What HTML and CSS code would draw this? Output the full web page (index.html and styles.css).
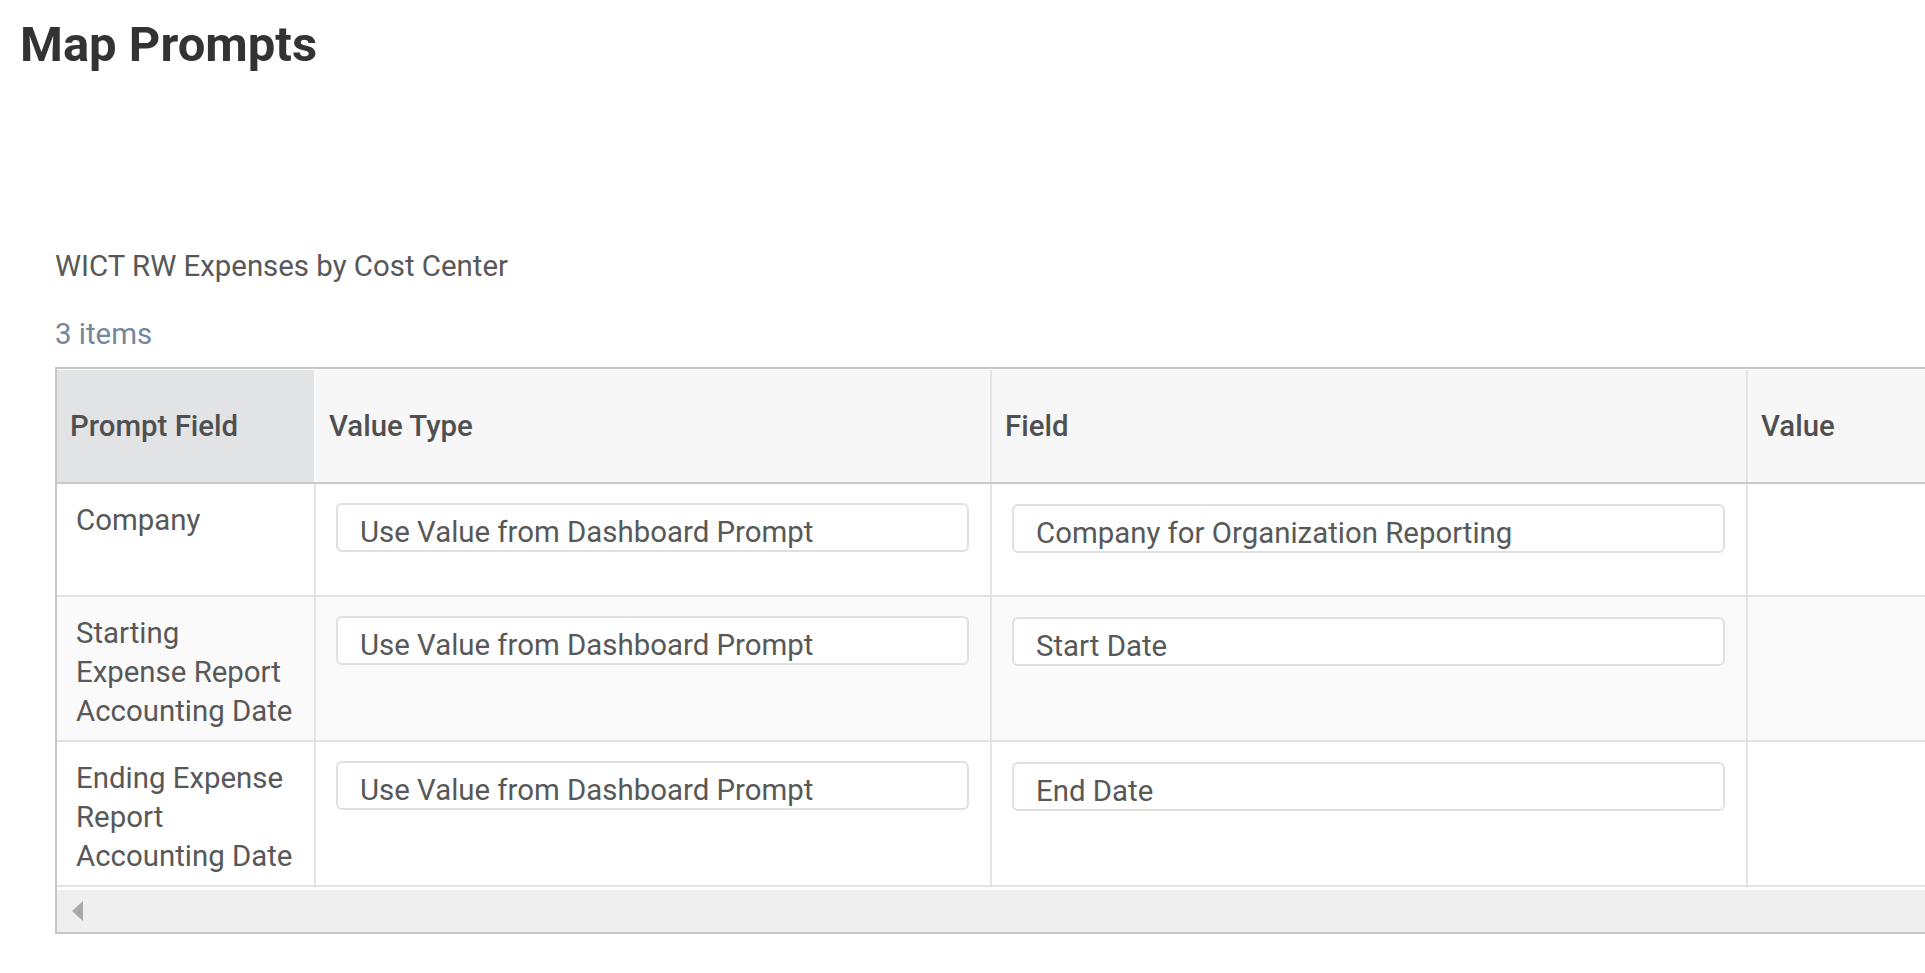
FILE: index.html
```html
<!DOCTYPE html>
<html lang="en">
<head>
  <meta charset="UTF-8">
  <title>Map Prompts</title>
  <link rel="stylesheet" href="styles.css">
</head>
<body>

  <h1 class="page-title">Map Prompts</h1>

  <section class="prompts">
    <div class="report-name">WICT RW Expenses by Cost Center</div>
    <div class="item-count">3 items</div>

    <!-- Prompt grid -->
    <div class="grid">
      <div class="grid-head">
        <div class="cell head first">Prompt Field</div>
        <div class="cell head">Value Type</div>
        <div class="cell head">Field</div>
        <div class="cell head">Value</div>
      </div>

      <div class="grid-row">
        <div class="cell label">Company</div>
        <div class="cell"><div class="box">Use Value from Dashboard Prompt</div></div>
        <div class="cell"><div class="box lower">Company for Organization Reporting</div></div>
        <div class="cell"></div>
      </div>

      <div class="grid-row tall alt">
        <div class="cell label">Starting<br>Expense Report<br>Accounting Date</div>
        <div class="cell"><div class="box">Use Value from Dashboard Prompt</div></div>
        <div class="cell"><div class="box lower">Start Date</div></div>
        <div class="cell"></div>
      </div>

      <div class="grid-row tall">
        <div class="cell label">Ending Expense<br>Report<br>Accounting Date</div>
        <div class="cell"><div class="box">Use Value from Dashboard Prompt</div></div>
        <div class="cell"><div class="box lower">End Date</div></div>
        <div class="cell"></div>
      </div>

      <div class="scroller">
        <span class="arrow-left"></span>
      </div>
    </div>
  </section>

</body>
</html>
```

FILE: styles.css
```css
html, body {
  overflow: hidden;
}

body {
  margin: 0;
  background: #fff;
  font-family: Roboto, "Liberation Sans", sans-serif;
  font-size: 29.4px;
  line-height: 39px;
  color: #585858;
}

.page-title {
  margin: 15px 0 0 20px;
  font-size: 49px;
  line-height: 59px;
  font-weight: 700;
  color: #333;
}

.prompts {
  margin: 173px 0 0 55px;
}

.report-name {
  color: #585858;
}

.item-count {
  margin-top: 29px;
  color: #74879c;
}

.grid {
  margin-top: 13px;
  width: calc(100vw - 55px);
  box-sizing: border-box;
  border: 2px solid #c6c6c6;
  border-right: none;
}

.grid-head,
.grid-row {
  display: grid;
  grid-template-columns: 259px 676px 756px 1fr;
}

.grid-head {
  height: 112px;
  background: #f7f7f7;
  border-top: 1px solid #fff;
  border-bottom: 2px solid #c9c9c9;
}

.grid-row {
  height: 111px;
  border-bottom: 2px solid #e2e2e2;
}

.grid-row.tall {
  height: 143px;
}

.grid-row.alt {
  background: #fafafa;
}

.cell {
  box-sizing: border-box;
  border-right: 2px solid #e4e4e4;
  padding: 19px 21px 0 20px;
}

.cell:last-child {
  border-right: none;
}

.cell.head {
  display: flex;
  align-items: center;
  padding: 0 12px 0 13px;
  font-weight: 500;
  color: #505050;
}

.cell.head.first {
  background: #e2e3e5;
  border-right-color: #fafafa;
}

.cell.label {
  padding: 17px 14px 0 19px;
}

.box {
  box-sizing: border-box;
  height: 49px;
  padding: 7px 23px 0 22px;
  line-height: 40px;
  border: 2px solid #e0e0e0;
  border-radius: 6px;
  background: #fff;
  color: #585858;
  white-space: nowrap;
}

.box.lower {
  margin-top: 1px;
}

.scroller {
  display: flex;
  align-items: center;
  height: 42px;
  margin-top: 3px;
  background: #efefef;
}

.arrow-left {
  width: 0;
  height: 0;
  margin-left: 15px;
  border-top: 10px solid transparent;
  border-bottom: 10px solid transparent;
  border-right: 11px solid #a9a9a9;
}
```
